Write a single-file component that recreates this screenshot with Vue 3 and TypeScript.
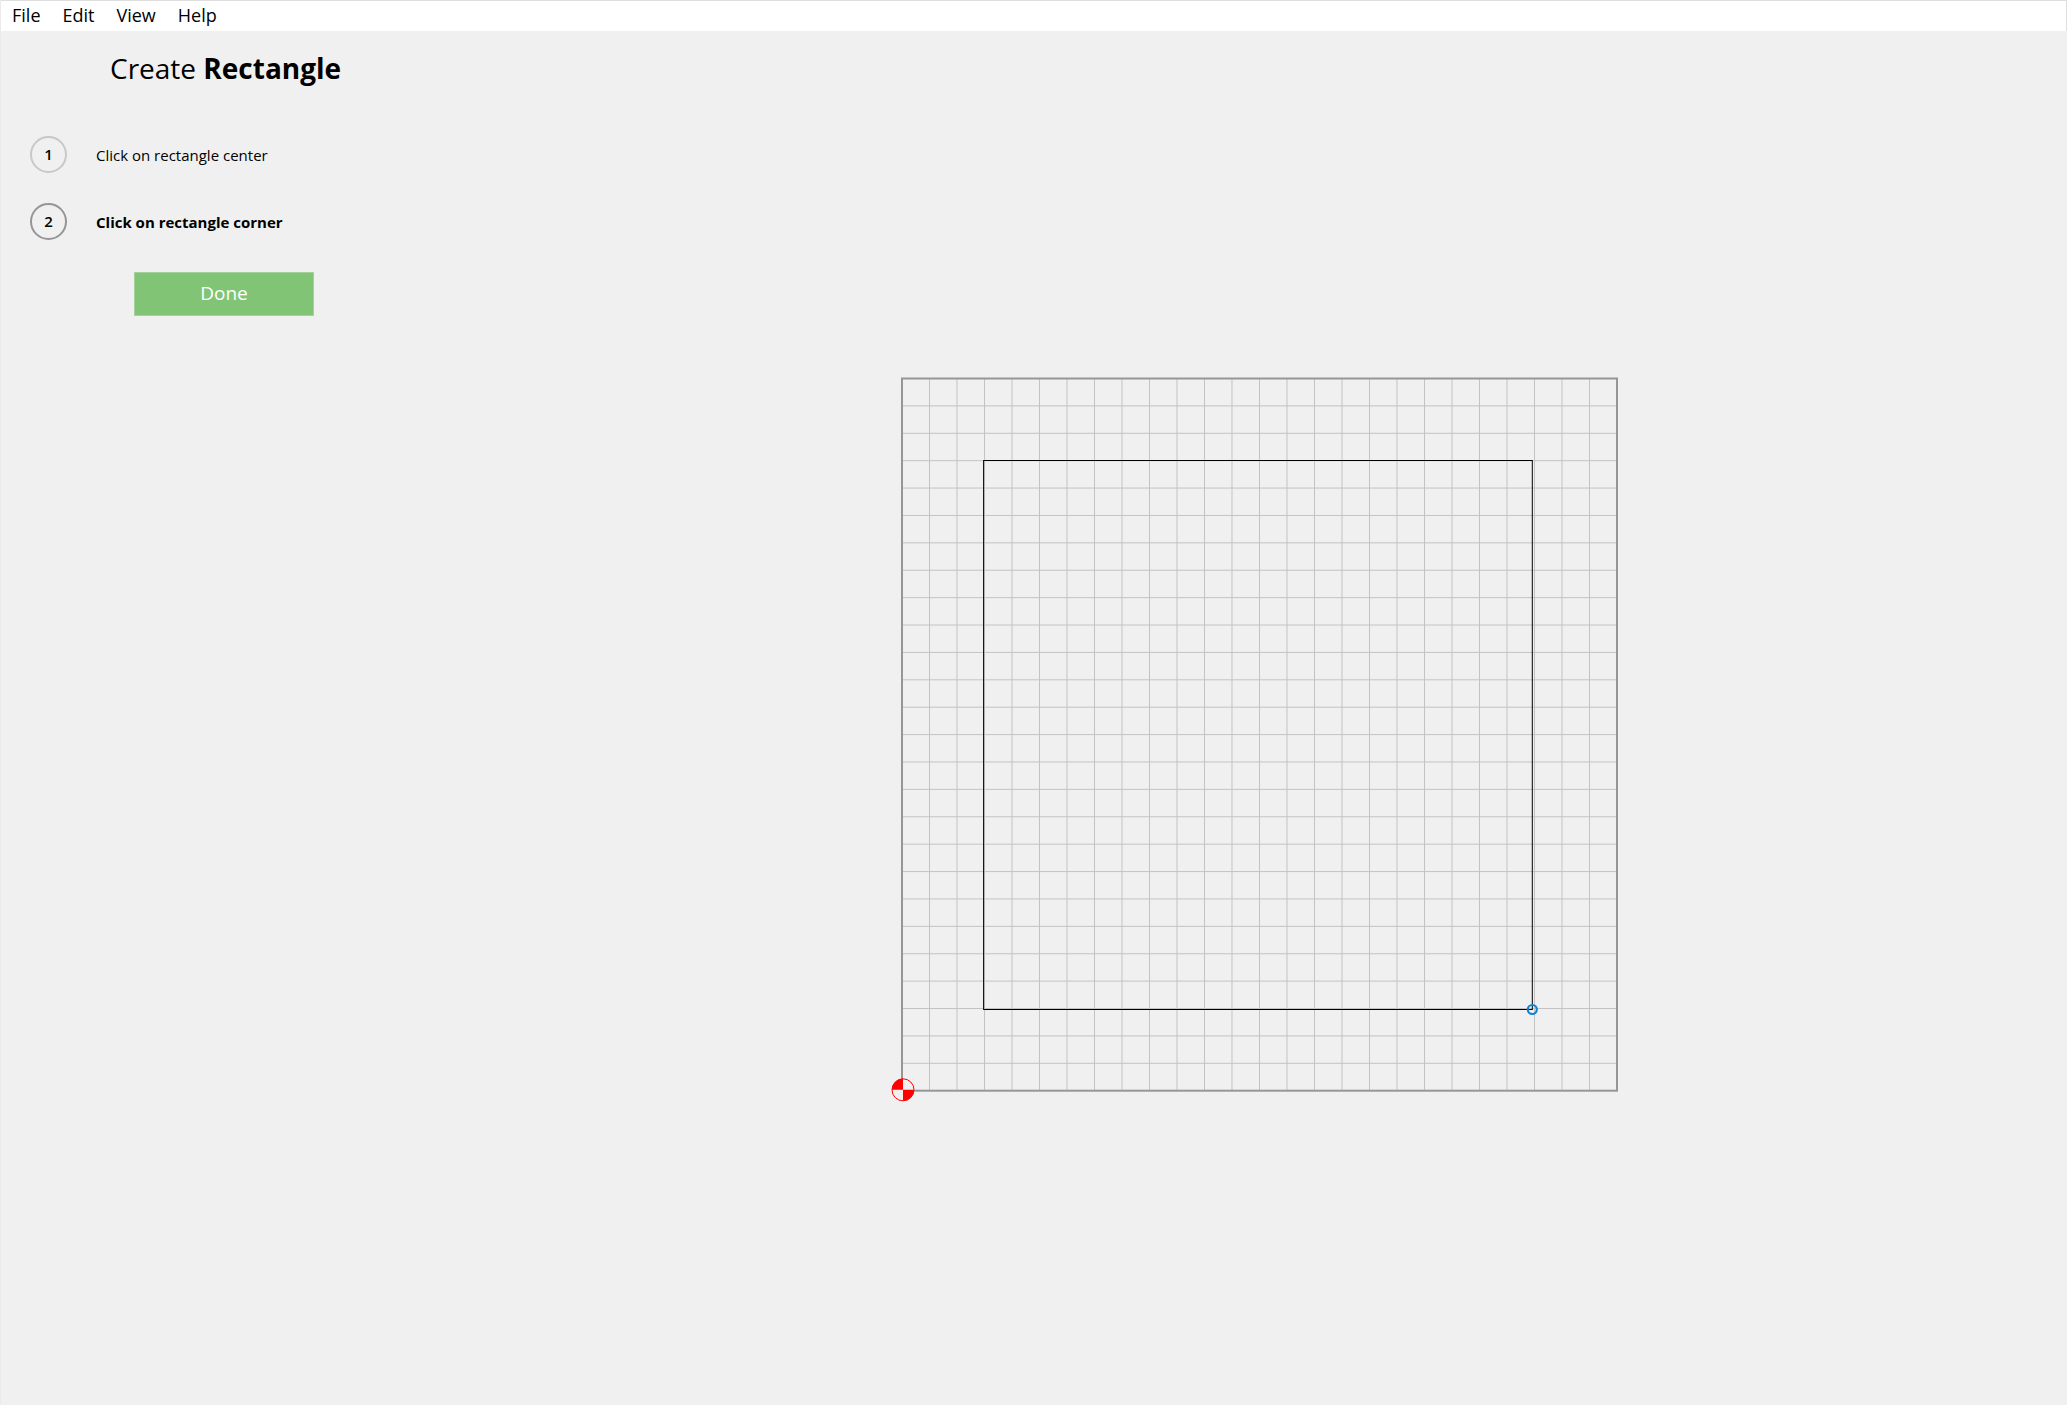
<script setup lang="ts">
interface Step {
  id: number
  text: string
}

const menus: string[] = ['File', 'Edit', 'View', 'Help']
const steps: Step[] = [
  { id: 1, text: 'Click on rectangle center' },
  { id: 2, text: 'Click on rectangle corner' },
]
const currentStep = 2

const cells = 26
const bed = { left: 12, top: 12.5, right: 727, bottom: 724.7 }
const shape = { left: 93.6, top: 94.5, right: 642.3, bottom: 643.5 }
const origin = { x: 13, y: 723.8 }

const inner = Array.from({ length: cells - 1 }, (_, i) => i + 1)
const columns = inner.map((n) => bed.left + ((bed.right - bed.left) * n) / cells)
const rows = inner.map((n) => bed.top + ((bed.bottom - bed.top) * n) / cells)
</script>

<template>
  <div class="app">
    <nav class="menubar">
      <button v-for="menu in menus" :key="menu" type="button" class="menu">{{ menu }}</button>
    </nav>
    <div class="workspace">
      <aside class="panel">
        <h1 class="title">Create <strong>Rectangle</strong></h1>
        <ol class="steps">
          <li v-for="step in steps" :key="step.id" class="step" :class="{ current: step.id === currentStep }">
            <span class="badge">{{ step.id }}</span>
            <span class="label">{{ step.text }}</span>
          </li>
        </ol>
        <button type="button" class="done">Done</button>
      </aside>
      <main class="stage">
        <svg class="drawing" width="740" height="740" viewBox="0 0 740 740" role="img" aria-label="Work area">
          <g stroke="#c3c3c3" stroke-width="1">
            <line v-for="x in columns" :key="'c' + x" :x1="x" :x2="x" :y1="bed.top" :y2="bed.bottom" />
            <line v-for="y in rows" :key="'r' + y" :x1="bed.left" :x2="bed.right" :y1="y" :y2="y" />
          </g>
          <rect
            :x="bed.left"
            :y="bed.top"
            :width="bed.right - bed.left"
            :height="bed.bottom - bed.top"
            fill="none"
            stroke="#969696"
            stroke-width="2"
          />
          <rect
            :x="shape.left"
            :y="shape.top"
            :width="shape.right - shape.left"
            :height="shape.bottom - shape.top"
            fill="none"
            stroke="#000"
            stroke-width="1"
          />
          <circle :cx="shape.right" :cy="shape.bottom" r="4.5" fill="none" stroke="#0d83d6" stroke-width="2.1" />
          <g :transform="`translate(${origin.x} ${origin.y})`">
            <circle r="11" fill="#f0f0f0" />
            <path d="M0 0H-11A11 11 0 0 1 0-11ZM0 0H11A11 11 0 0 1 0 11Z" fill="#f00" />
            <circle r="11" fill="none" stroke="#f00" stroke-width="1" />
          </g>
        </svg>
      </main>
    </div>
  </div>
</template>

<style>
body {
  background: #f0f0f0;
}
</style>

<style scoped>
.app {
  box-sizing: border-box;
  min-height: 100vh;
  border-left: 1px solid #ebebeb;
  background: #f0f0f0;
  color: #000;
  font-family: "Open Sans", "Noto Sans", sans-serif;
}
.menubar {
  display: flex;
  align-items: flex-start;
  gap: 22px;
  box-sizing: border-box;
  height: 31px;
  padding-left: 11px;
  border: 1px solid #dfdfdf;
  border-width: 1px 1px 0 0;
  background: #fff;
}
.menu {
  padding: 0;
  border: 0;
  background: none;
  color: inherit;
  font: 400 18px/28px "Open Sans", "Noto Sans", sans-serif;
}
.workspace {
  display: flex;
}
.panel {
  flex: 0 0 452px;
}
.title {
  margin: 18px 0 0 109px;
  font-size: 28px;
  font-weight: 400;
  line-height: 38px;
}
.title strong {
  font-weight: 700;
}
.steps {
  display: flex;
  flex-direction: column;
  gap: 30px;
  margin: 49px 0 0;
  padding: 0 0 0 29px;
  list-style: none;
}
.step {
  display: flex;
  align-items: center;
  gap: 29px;
}
.badge {
  box-sizing: border-box;
  width: 37px;
  height: 37px;
  border: 2px solid #c8c8c8;
  border-radius: 50%;
  font-size: 15px;
  font-weight: 600;
  line-height: 33px;
  text-align: center;
}
.label {
  font-size: 15px;
  line-height: 20px;
}
.current .badge {
  border-color: #969696;
}
.current .label {
  font-weight: 700;
}
.done {
  display: block;
  width: 180px;
  height: 44px;
  margin: 32px 0 0 133px;
  padding: 0 0 2px;
  border: 1px solid #a5d29a;
  background: #81c475;
  color: #fff;
  font: 500 19px/24px "Open Sans", "Noto Sans", sans-serif;
}
.stage {
  display: flex;
  flex: 1;
  justify-content: center;
  padding-top: 335px;
}
.drawing {
  flex: none;
}
</style>
